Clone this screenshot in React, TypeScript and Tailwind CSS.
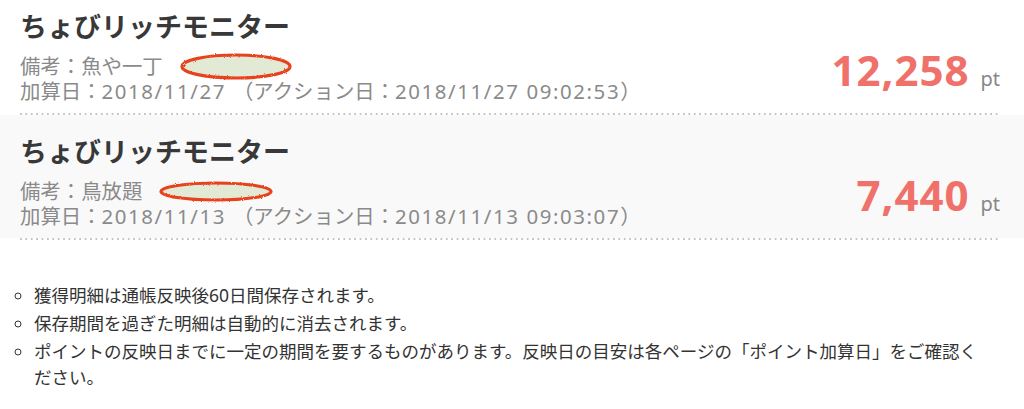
import React from "react";

type Entry = {
  note: string;
  added: string;
  action: string;
  points: string;
  ellipse: { w: number; h: number };
};

const entries: Entry[] = [
  {
    note: "備考：魚や一丁",
    added: "2018/11/27",
    action: "2018/11/27 09:02:53",
    points: "12,258",
    ellipse: { w: 110, h: 25 },
  },
  {
    note: "備考：鳥放題",
    added: "2018/11/13",
    action: "2018/11/13 09:03:07",
    points: "7,440",
    ellipse: { w: 112, h: 19 },
  },
];

function Scribble({ w, h, id }: { w: number; h: number; id: string }) {
  return (
    <svg width={w + 4} height={h + 4} viewBox={`0 0 ${w + 4} ${h + 4}`} className="shrink-0">
      <defs>
        <filter id={id} x="-10%" y="-30%" width="120%" height="160%">
          <feTurbulence type="fractalNoise" baseFrequency="0.9" numOctaves="2" seed="3" />
          <feDisplacementMap in="SourceGraphic" scale="2.4" />
        </filter>
      </defs>
      <ellipse
        cx={(w + 4) / 2}
        cy={(h + 4) / 2}
        rx={w / 2 - 1}
        ry={h / 2 - 1}
        fill="#e2e9d4"
        stroke="#e8431f"
        strokeWidth="3.2"
        filter={`url(#${id})`}
      />
    </svg>
  );
}

function Row({ e, i }: { e: Entry; i: number }) {
  return (
    <>
      <div className={i === 0 ? "bg-white" : "bg-[#f9f9f9]"}>
        <div
          className={`flex items-end justify-between pl-[20px] pr-[24px] pb-[9px] ${
            i === 0 ? "pt-[10px]" : "pt-[20px]"
          }`}
        >
          <div>
            <div className="text-[27px] font-bold leading-[34px] text-[#383838]">
              ちょびリッチモニター
            </div>
            <div className="mt-[10px] flex h-[25px] items-center text-[20.4px] leading-[25px] text-[#8a8a8a]">
              <span>{e.note}</span>
              <span className="ml-[16px] flex items-center">
                <Scribble w={e.ellipse.w} h={e.ellipse.h} id={`rough${i}`} />
              </span>
            </div>
            <div className="whitespace-pre text-[20.4px] leading-[25px] text-[#8a8a8a]">
              加算日：<span className="tracking-[1.6px]">{`${e.added} `}</span>（アクション日：
              <span className="tracking-[1.6px]">{e.action}</span>）
            </div>
          </div>
          <div className="mb-[4px] flex items-baseline leading-[42px]">
            <span className="text-[42px] font-bold tracking-[1px] text-[#f0706a]">{e.points}</span>
            <span className="ml-[11px] text-[20px] text-[#888888]">pt</span>
          </div>
        </div>
      </div>
      <div className="ml-[20px] mr-[24px] h-[2px] bg-[linear-gradient(to_right,#c4c4c4_2px,transparent_2px)] bg-[length:5.4px_2px]" />
    </>
  );
}

export default function App() {
  return (
    <div className="h-[409px] w-[1024px] overflow-hidden bg-white font-['Noto_Sans','Noto_Sans_CJK_JP',sans-serif]">
      {entries.map((e, i) => (
        <Row key={i} e={e} i={i} />
      ))}
      <ul className="mt-[42px] list-[circle] pl-[34px] pr-[30px] text-[17.5px] leading-[26px] text-[#333333]">
        <li className="mb-[2px]">獲得明細は通帳反映後60日間保存されます。</li>
        <li className="mb-[2px]">保存期間を過ぎた明細は自動的に消去されます。</li>
        <li className="mb-[2px]">
          ポイントの反映日までに一定の期間を要するものがあります。反映日の目安は各ページの「ポイント加算日」をご確認ください。
        </li>
      </ul>
    </div>
  );
}
